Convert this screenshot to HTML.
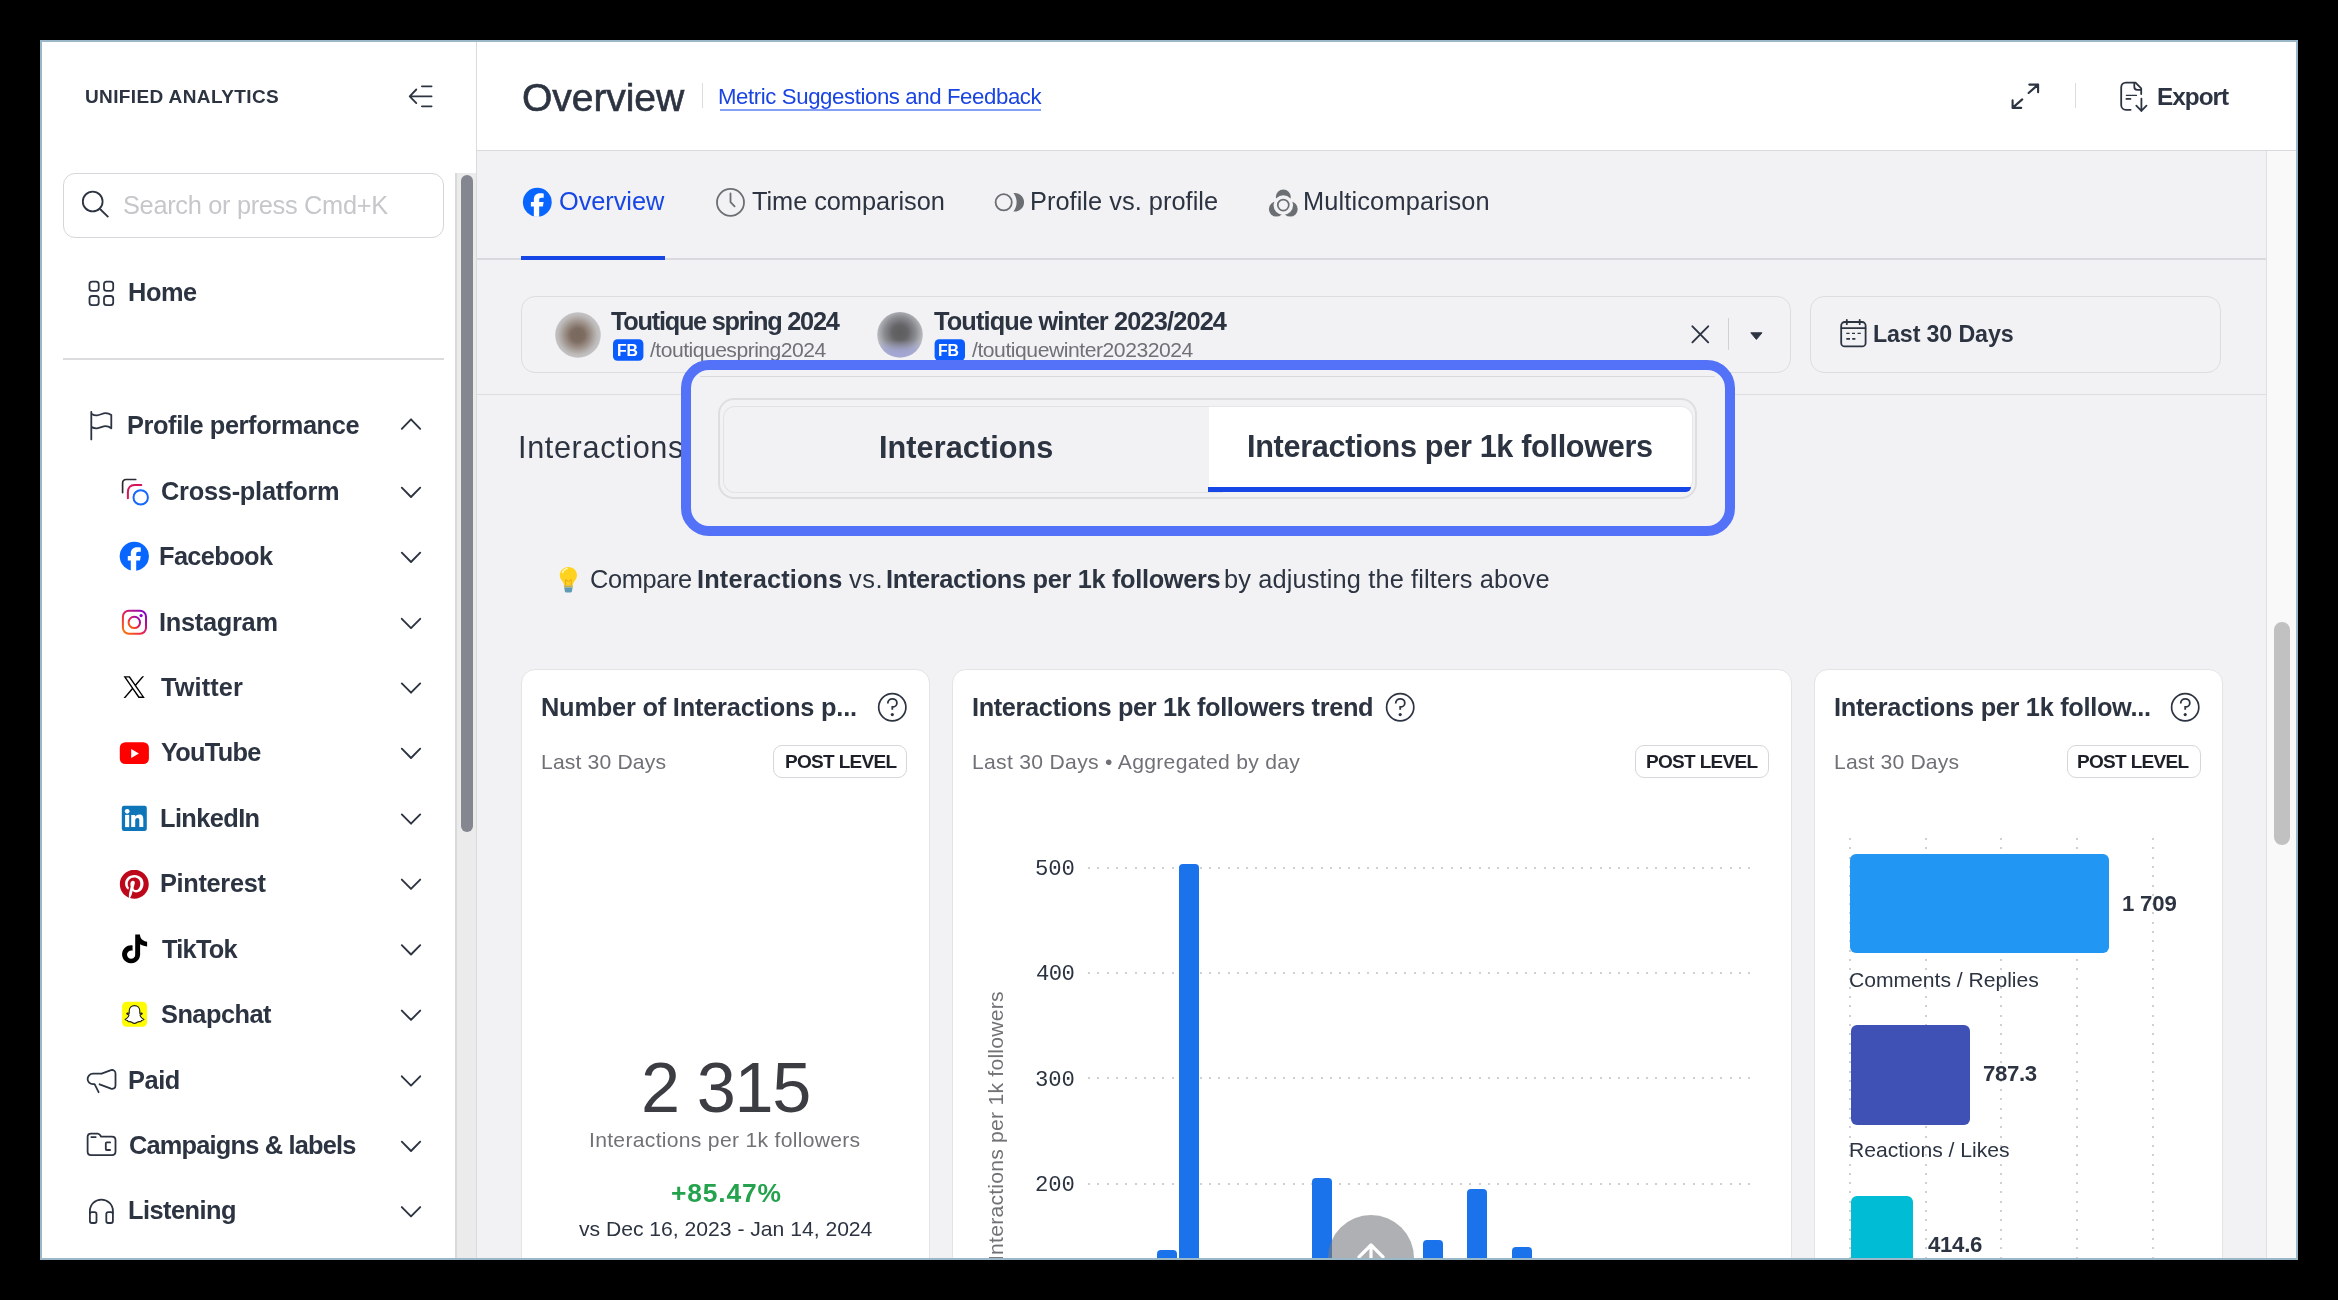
<!DOCTYPE html>
<html><head><meta charset="utf-8">
<style>
*{box-sizing:border-box;margin:0;padding:0}
html,body{width:2338px;height:1300px;overflow:hidden;background:#000;font-family:"Liberation Sans",sans-serif}
.win{position:absolute;left:40px;top:40px;width:2258px;height:1220px;border:2px solid #9bb8c9;background:#fff;overflow:hidden}
.pg{position:absolute;left:-42px;top:-42px;width:2338px;height:1300px}
.a{position:absolute}
.t{position:absolute;white-space:nowrap;line-height:1;will-change:transform}
svg{position:absolute;overflow:visible}
.card{position:absolute;background:#fff;border:1px solid #e4e4e7;border-radius:14px}
.badge{position:absolute;border:1.5px solid #d6d7da;border-radius:9px;background:#fff;width:134px;height:33px}
</style></head><body>
<div class="win"><div class="pg">
<!-- sidebar structure -->
<div class="a" style="left:475.5px;top:42px;width:1.5px;height:1216px;background:#dadbde"></div>
<div class="a" style="left:63px;top:173px;width:381px;height:65px;border:1.5px solid #d5d6d9;border-radius:12px"></div>
<div class="a" style="left:63px;top:357.5px;width:381px;height:2px;background:#dcdcde"></div>
<div class="a" style="left:455px;top:173px;width:21px;height:1085px;background:#ebebec;border-left:2px solid #d9d9dc"></div>
<div class="a" style="left:461px;top:175px;width:12px;height:657px;background:#84878f;border-radius:6px"></div>

<!-- header -->
<div class="a" style="left:477px;top:150px;width:1819px;height:1px;background:#d9dadd"></div>
<div class="a" style="left:701.5px;top:83px;width:1px;height:25px;background:#dcdde0"></div>
<div class="a" style="left:719.5px;top:108.6px;width:321.5px;height:2px;background:#86a0f3"></div>
<div class="a" style="left:2075px;top:83px;width:1px;height:25px;background:#dcdde0"></div>

<!-- main bg -->
<div class="a" style="left:477px;top:151px;width:1789px;height:1107px;background:#f2f2f4"></div>
<div class="a" style="left:2266px;top:151px;width:30px;height:1107px;background:#f9f9f9;border-left:1px solid #e0e0e2"></div>
<div class="a" style="left:2274px;top:622px;width:16px;height:223px;background:#c1c1c1;border-radius:8px"></div>

<!-- tabs -->
<div class="a" style="left:477px;top:258px;width:1789px;height:2px;background:#d9dadd"></div>
<div class="a" style="left:521px;top:256px;width:144px;height:4px;background:#1646e6"></div>

<!-- filter -->
<div class="a" style="left:521px;top:296px;width:1270px;height:77px;border:1.5px solid #dcdde0;border-radius:14px"></div>
<div class="a" style="left:1810px;top:296px;width:411px;height:77px;border:1.5px solid #dcdde0;border-radius:14px"></div>
<div class="a" style="left:477px;top:394px;width:1789px;height:1px;background:#dcdde0"></div>
<div class="a" style="left:1727.5px;top:318px;width:1.5px;height:32px;background:#d0d1d4"></div>

<!-- cards -->
<div class="card" style="left:521px;top:669px;width:409px;height:700px"></div>
<div class="card" style="left:952px;top:669px;width:840px;height:700px"></div>
<div class="card" style="left:1814px;top:669px;width:409px;height:700px"></div>
<div class="badge" style="left:773px;top:745px"></div>
<div class="badge" style="left:1635px;top:745px"></div>
<div class="badge" style="left:2066.5px;top:745px"></div>

<div class="a" style="left:1088px;top:866.7px;width:668px;height:2px;background:repeating-linear-gradient(90deg,#cfd0d3 0 2px,transparent 2px 9.3px)"></div>
<div class="a" style="left:1088px;top:972.0px;width:668px;height:2px;background:repeating-linear-gradient(90deg,#cfd0d3 0 2px,transparent 2px 9.3px)"></div>
<div class="a" style="left:1088px;top:1077.4px;width:668px;height:2px;background:repeating-linear-gradient(90deg,#cfd0d3 0 2px,transparent 2px 9.3px)"></div>
<div class="a" style="left:1088px;top:1182.7px;width:668px;height:2px;background:repeating-linear-gradient(90deg,#cfd0d3 0 2px,transparent 2px 9.3px)"></div>
<div class="a" style="left:1157.3px;top:1249.6px;width:19.7px;height:50.4px;background:#1a73ea;border-radius:4px 4px 0 0"></div>
<div class="a" style="left:1179.3px;top:864.0px;width:20.1px;height:436.0px;background:#1a73ea;border-radius:4px 4px 0 0"></div>
<div class="a" style="left:1312.2px;top:1177.8px;width:19.7px;height:122.2px;background:#1a73ea;border-radius:4px 4px 0 0"></div>
<div class="a" style="left:1423.0px;top:1240.3px;width:20.2px;height:59.7px;background:#1a73ea;border-radius:4px 4px 0 0"></div>
<div class="a" style="left:1467.4px;top:1188.9px;width:20.0px;height:111.1px;background:#1a73ea;border-radius:4px 4px 0 0"></div>
<div class="a" style="left:1512.0px;top:1247.0px;width:19.7px;height:53.0px;background:#1a73ea;border-radius:4px 4px 0 0"></div>
<div class="a" style="left:1848.8px;top:838px;width:2px;height:430px;background:repeating-linear-gradient(180deg,#cfd0d3 0 2px,transparent 2px 9.3px)"></div>
<div class="a" style="left:1924.7px;top:838px;width:2px;height:430px;background:repeating-linear-gradient(180deg,#cfd0d3 0 2px,transparent 2px 9.3px)"></div>
<div class="a" style="left:2000.4px;top:838px;width:2px;height:430px;background:repeating-linear-gradient(180deg,#cfd0d3 0 2px,transparent 2px 9.3px)"></div>
<div class="a" style="left:2076.3px;top:838px;width:2px;height:430px;background:repeating-linear-gradient(180deg,#cfd0d3 0 2px,transparent 2px 9.3px)"></div>
<div class="a" style="left:2151.7px;top:838px;width:2px;height:430px;background:repeating-linear-gradient(180deg,#cfd0d3 0 2px,transparent 2px 9.3px)"></div>
<div class="a" style="left:1850px;top:853.8px;width:259px;height:99.2px;background:#2196f3;border-radius:6px"></div>
<div class="a" style="left:1850.5px;top:1025px;width:119px;height:99.5px;background:#3f51b5;border-radius:6px"></div>
<div class="a" style="left:1850.5px;top:1196px;width:62.5px;height:120px;background:#00bcd4;border-radius:6px"></div>
<div class="a" style="left:1328px;top:1215px;width:86px;height:86px;border-radius:50%;background:rgba(120,123,128,0.6)"></div>
<svg width="2338" height="1300" style="left:0;top:0"><path d="M1371 1245V1262M1359 1257L1371 1245L1383 1257" fill="none" stroke="#fff" stroke-width="3.2" stroke-linecap="round" stroke-linejoin="round"/></svg>
<div class="t" style="left:985.05px;top:1261.2px;font-size:21.14px;color:#707276;letter-spacing:0.234px;transform-origin:0 0;transform:rotate(-90deg)">Interactions per 1k followers</div>

<!-- callout -->
<div class="a" style="z-index:10;left:681px;top:360px;width:1054px;height:176px;border:10px solid #5472f8;border-radius:28px;background:#f2f2f4"></div>
<div class="a" style="z-index:10;left:700px;top:375.5px;width:1015px;height:1.5px;background:#d9d9dc"></div>
<div class="a" style="z-index:10;left:718px;top:397.5px;width:979px;height:101px;border:2px solid #dedee1;border-radius:16px"></div>
<div class="a" style="z-index:10;left:722.5px;top:405.5px;width:500px;height:87px;border:1.5px solid #e2e2e5;border-right:none;border-radius:12px 0 0 12px"></div>
<div class="a" style="z-index:10;left:1209px;top:406px;width:484px;height:86px;background:#fff;border-radius:0 12px 12px 0;border:1px solid #e6e6e8;border-left:none"></div>
<div class="a" style="z-index:10;left:1208px;top:487px;width:483px;height:4.5px;background:#1646e6;border-radius:0 0 10px 0"></div>

<svg width="2338" height="1300" style="left:0;top:0"><g fill="none" stroke="#2c3341" stroke-width="1.8" stroke-linecap="round" stroke-linejoin="round"><path d="M421.9 86.3H431.6M409.9 96.3H431.6M421.9 106.3H431.6M416.3 89.5L409.7 96.3L416.3 103.1"/></g><g fill="none" stroke="#2c3341" stroke-width="1.8"><circle cx="92.7" cy="201.5" r="9.9"/><path d="M100 209L108.3 217.2"/></g><g fill="none" stroke="#2c3341" stroke-width="1.8"><rect x="89.5" y="281.6" width="9.2" height="9.2" rx="2.6"/><rect x="89.5" y="296" width="9.2" height="9.2" rx="2.6"/><rect x="104" y="281.6" width="9.2" height="9.2" rx="2.6"/><rect x="104" y="296" width="9.2" height="9.2" rx="2.6"/></g><path d="M91.3 439.4V411.8M91.3 413.7C93.5 415 95.2 415.6 97 415.4C100 415.1 102.8 413.2 105.5 413.2C108 413.2 110 414 111.3 414.9V428.3C110 427.3 108 426.1 105.5 426.1C102.8 426.1 100 428.1 97 428.3C95 428.5 93.2 427.9 91.3 426.9" fill="none" stroke="#2c3341" stroke-width="1.8" stroke-linecap="round" stroke-linejoin="round"/><polyline points="401.8,428.8 411,419.3 420.2,428.8" fill="none" stroke="#2c3341" stroke-width="1.9" stroke-linecap="round" stroke-linejoin="round"/><polyline points="401.8,487.7 411,497.0 420.2,487.7" fill="none" stroke="#2c3341" stroke-width="1.9" stroke-linecap="round" stroke-linejoin="round"/><polyline points="401.8,552.7 411,562.0 420.2,552.7" fill="none" stroke="#2c3341" stroke-width="1.9" stroke-linecap="round" stroke-linejoin="round"/><polyline points="401.8,618.8 411,628.1 420.2,618.8" fill="none" stroke="#2c3341" stroke-width="1.9" stroke-linecap="round" stroke-linejoin="round"/><polyline points="401.8,683.4 411,692.7 420.2,683.4" fill="none" stroke="#2c3341" stroke-width="1.9" stroke-linecap="round" stroke-linejoin="round"/><polyline points="401.8,748.7 411,758.0 420.2,748.7" fill="none" stroke="#2c3341" stroke-width="1.9" stroke-linecap="round" stroke-linejoin="round"/><polyline points="401.8,814.4 411,823.7 420.2,814.4" fill="none" stroke="#2c3341" stroke-width="1.9" stroke-linecap="round" stroke-linejoin="round"/><polyline points="401.8,879.6 411,888.9 420.2,879.6" fill="none" stroke="#2c3341" stroke-width="1.9" stroke-linecap="round" stroke-linejoin="round"/><polyline points="401.8,945.2 411,954.5 420.2,945.2" fill="none" stroke="#2c3341" stroke-width="1.9" stroke-linecap="round" stroke-linejoin="round"/><polyline points="401.8,1010.6 411,1019.9 420.2,1010.6" fill="none" stroke="#2c3341" stroke-width="1.9" stroke-linecap="round" stroke-linejoin="round"/><polyline points="401.8,1076.3 411,1085.6 420.2,1076.3" fill="none" stroke="#2c3341" stroke-width="1.9" stroke-linecap="round" stroke-linejoin="round"/><polyline points="401.8,1141.7 411,1151.0 420.2,1141.7" fill="none" stroke="#2c3341" stroke-width="1.9" stroke-linecap="round" stroke-linejoin="round"/><polyline points="401.8,1207.1 411,1216.4 420.2,1207.1" fill="none" stroke="#2c3341" stroke-width="1.9" stroke-linecap="round" stroke-linejoin="round"/><path d="M122.6 492.6V483.2C122.6 481.1 124 479.5 126.2 479.5H135.7" fill="none" stroke="#2a2b33" stroke-width="1.7" stroke-linecap="round"/><path d="M127.9 498.3V492C127.9 488 130.5 484.9 134.5 484.9H141.3" fill="none" stroke="#d6145a" stroke-width="2" stroke-linecap="round"/><circle cx="140.7" cy="497.4" r="7.2" fill="none" stroke="#1668ff" stroke-width="2"/><circle cx="134.3" cy="556.3" r="14.6" fill="#0866ff"/><path d="M130.80 571.10 L130.80 560.60 L127.80 560.60 L127.80 556.00 L130.80 556.00 L130.80 553.70 C130.80 549.50 133.10 547.20 137.10 547.20 C138.60 547.20 140.00 547.40 140.80 547.50 L140.80 551.70 L138.40 551.70 C136.80 551.70 136.20 552.50 136.20 554.00 L136.20 556.00 L140.70 556.00 L140.00 560.60 L136.20 560.60 L136.20 571.10 Z" fill="#fff"/><defs><linearGradient id="ig" x1="0" y1="1" x2="1" y2="0"><stop offset="0" stop-color="#ff7a00"/><stop offset="0.45" stop-color="#e8204f"/><stop offset="1" stop-color="#7a00d0"/></linearGradient></defs><g fill="none" stroke="url(#ig)" stroke-width="2"><rect x="122.9" y="610.8" width="23.1" height="23" rx="6"/><circle cx="134.3" cy="622.4" r="5.7"/></g><circle cx="141.1" cy="615.6" r="1.6" fill="#8a00c8"/><g transform="translate(123.5 676.2) scale(0.01775)"><path d="M714.163 519.284L1160.89 0H1055.03L667.137 450.887L357.328 0H0L468.492 681.821L0 1226.37H105.866L515.491 750.218L842.672 1226.37H1200L714.137 519.284H714.163ZM569.165 687.828L521.697 619.934L144.011 79.6944H306.615L611.412 515.685L658.88 583.579L1055.08 1150.3H892.476L569.165 687.854V687.828Z" fill="#000"/></g><rect x="119.8" y="742.2" width="29.1" height="21.9" rx="5.5" fill="#ff0000"/><path d="M131.2 749L138.9 753.5L131.2 757.9Z" fill="#fff"/><rect x="121.8" y="805.8" width="25" height="25.1" rx="2.2" fill="#0e76b8"/><circle cx="127.2" cy="811.3" r="2.35" fill="#fff"/><rect x="125.1" y="814.9" width="4.1" height="12.2" fill="#fff"/><path d="M131.2 814.9H135.1V816.7C135.8 815.5 137.2 814.5 139.4 814.5C142.4 814.5 143.3 816.5 143.3 819.4V827.1H139.3V820.3C139.3 818.9 138.9 818 137.4 818C135.9 818 135.2 819 135.2 820.6V827.1H131.2Z" fill="#fff"/><g transform="translate(119.8 869.7) scale(1.208)"><path fill="#bd081c" d="M12.017 0C5.396 0 .029 5.367.029 11.987c0 5.079 3.158 9.417 7.618 11.162-.105-.949-.199-2.403.041-3.439.219-.937 1.406-5.957 1.406-5.957s-.359-.72-.359-1.781c0-1.663.967-2.911 2.168-2.911 1.024 0 1.518.769 1.518 1.688 0 1.029-.653 2.567-.992 3.992-.285 1.193.6 2.165 1.775 2.165 2.128 0 3.768-2.245 3.768-5.487 0-2.861-2.063-4.869-5.008-4.869-3.41 0-5.409 2.562-5.409 5.199 0 1.033.394 2.143.889 2.741.099.12.112.225.085.345-.09.375-.293 1.199-.334 1.363-.053.225-.172.271-.401.165-1.495-.69-2.433-2.878-2.433-4.646 0-3.776 2.748-7.252 7.920-7.252 4.158 0 7.392 2.967 7.392 6.923 0 4.135-2.607 7.462-6.233 7.462-1.214 0-2.354-.629-2.758-1.379l-.749 2.848c-.269 1.045-1.004 2.352-1.498 3.146 1.123.345 2.306.535 3.55.535 6.607 0 11.985-5.365 11.985-11.987C23.97 5.39 18.592.026 11.985.026L12.017 0z"/></g><g transform="translate(120.2 934.5) scale(1.2)"><path fill="#000" d="M12.525.02c1.31-.02 2.61-.01 3.91-.02.08 1.53.63 3.09 1.75 4.17 1.120 1.11 2.7 1.62 4.24 1.79v4.03c-1.44-.05-2.89-.35-4.2-.97-.57-.26-1.1-.59-1.62-.93-.01 2.92.01 5.840-.02 8.750-.08 1.4-.54 2.79-1.35 3.940-1.31 1.92-3.58 3.17-5.91 3.21-1.43.08-2.86-.31-4.08-1.03-2.02-1.19-3.44-3.37-3.65-5.71-.02-.5-.03-1-.01-1.49.18-1.9 1.12-3.72 2.58-4.96 1.660-1.44 3.98-2.13 6.15-1.72.02 1.48-.04 2.96-.04 4.440-.99-.32-2.15-.23-3.02.37-.63.41-1.11 1.04-1.36 1.75-.21.51-.15 1.070-.14 1.610.24 1.64 1.82 3.02 3.5 2.87 1.12-.01 2.19-.66 2.77-1.61.19-.33.4-.67.41-1.06.1-1.790.06-3.570.07-5.360.01-4.030-.01-8.050.02-12.070z"/></g><rect x="122.1" y="1001.7" width="24.9" height="25.1" rx="4.5" fill="#fffc00"/><path d="M134.5 1005.6C131.2 1005.6 129.2 1008 129.2 1011V1013.4L127.4 1013C126.8 1013 126.5 1013.6 127 1014L129 1015.1C128.4 1017 127 1018.6 125 1019.4C125.4 1020.3 126.7 1020.4 127.6 1020.6C127.9 1021.2 128 1021.8 128.7 1021.7C129.8 1021.5 130.8 1021.6 131.8 1022.3C132.6 1022.9 133.4 1023.4 134.5 1023.4C135.6 1023.4 136.4 1022.9 137.2 1022.3C138.2 1021.6 139.2 1021.5 140.3 1021.7C141 1021.8 141.1 1021.2 141.4 1020.6C142.3 1020.4 143.6 1020.3 144 1019.4C142 1018.6 140.6 1017 140 1015.1L142 1014C142.5 1013.6 142.2 1013 141.6 1013L139.8 1013.4V1011C139.8 1008 137.8 1005.6 134.5 1005.6Z" fill="#fff" stroke="#1d1d1d" stroke-width="1.1" stroke-linejoin="round"/><path d="M101.6 1073.7H93C89.9 1073.7 87.6 1076.2 87.6 1079C87.6 1081.8 89.9 1084.2 93 1084.2H94.6L98.6 1092.2M99.6 1084.3L111 1088.7C113.3 1089.4 115.5 1087.9 115.5 1085.5V1073.4C115.5 1071 113.3 1069.5 111 1070.2L101.6 1073.7" fill="none" stroke="#2c3341" stroke-width="1.8" stroke-linecap="round" stroke-linejoin="round"/><path d="M87.6 1151.5V1137C87.6 1135 89 1133.6 91 1133.6H97.6C98.5 1133.6 99.2 1134 99.8 1134.8L101.1 1136.6H112C114 1136.6 115.5 1138 115.5 1140V1151.6C115.5 1153.6 114 1155.1 112 1155.1H91C89 1155.1 87.6 1153.6 87.6 1151.5Z" fill="none" stroke="#2c3341" stroke-width="1.8" stroke-linejoin="round"/><path d="M91.3 1137.1H95.7M110.1 1142.4H106.8Q105.8 1142.4 105.8 1143.4V1149Q105.8 1150 106.8 1150H110.1" fill="none" stroke="#2c3341" stroke-width="1.8" stroke-linecap="round"/><g fill="none" stroke="#2c3341" stroke-width="1.8" stroke-linejoin="round"><path d="M89.9 1214V1211C89.9 1204.6 95 1199.6 101.4 1199.6C107.8 1199.6 112.9 1204.6 112.9 1211V1214"/><rect x="89.9" y="1212.2" width="6.6" height="10.8" rx="2"/><rect x="106.3" y="1212.2" width="6.6" height="10.8" rx="2"/></g><g fill="none" stroke="#2c3341" stroke-width="2.1" stroke-linecap="round" stroke-linejoin="round"><path d="M2029.3 84.6H2038.1V92.3M2038.1 84.6L2028.6 93M2012.6 100.4V107.9H2021.2M2012.6 107.9L2022.2 99.4"/></g><g fill="none" stroke="#2c3341" stroke-width="1.8" stroke-linecap="round" stroke-linejoin="round"><path d="M2130.6 109.8H2126C2123.2 109.8 2121.2 107.8 2121.2 105V87.4C2121.2 84.6 2123.2 82.6 2126 82.6H2135.5L2141.2 88.4V94"/><path d="M2134.3 83V86.8C2134.3 88.5 2135.5 89.8 2137.2 89.8H2141"/><path d="M2141.4 98.6V111M2136.3 105.7L2141.4 110.9L2146.5 105.7"/><path d="M2126.4 98.9H2130.4"/></g><path d="M2126.4 95.4H2136.5" stroke="#2c3341" stroke-width="1.3" stroke-linecap="round"/><circle cx="537.3" cy="202.2" r="14.4" fill="#0866ff"/><path d="M533.85 216.80 L533.85 206.44 L530.89 206.44 L530.89 201.90 L533.85 201.90 L533.85 199.64 C533.85 195.49 536.12 193.22 540.06 193.22 C541.54 193.22 542.92 193.42 543.71 193.52 L543.71 197.66 L541.34 197.66 C539.77 197.66 539.17 198.45 539.17 199.93 L539.17 201.90 L543.61 201.90 L542.92 206.44 L539.17 206.44 L539.17 216.80 Z" fill="#fff"/><g fill="none" stroke="#6b6f73" stroke-width="1.8" stroke-linecap="round" stroke-linejoin="round"><circle cx="730.5" cy="202.4" r="13.5"/><path d="M730.5 193.4V202.2L734.6 206.4"/></g><circle cx="1003.7" cy="202.3" r="8.1" fill="none" stroke="#6b6f73" stroke-width="1.8"/><path d="M1013.4 193.1A9.3 9.3 0 1 1 1013.4 211.5A14.8 14.8 0 0 0 1013.4 193.1Z" fill="#6b6f73"/><defs><mask id="mc"><rect x="1260" y="180" width="50" height="45" fill="#fff"/><circle cx="1283.3" cy="205.1" r="9.8" fill="#000"/></mask></defs><g mask="url(#mc)" fill="#6b6f73"><circle cx="1283.3" cy="197.1" r="7.5"/><circle cx="1276.4" cy="209.1" r="7.5"/><circle cx="1290.2" cy="209.1" r="7.5"/></g><circle cx="1283.3" cy="205.1" r="5.5" fill="none" stroke="#6b6f73" stroke-width="1.7"/><defs><radialGradient id="av1" cx="0.49" cy="0.5" r="0.5"><stop offset="0" stop-color="#79685c"/><stop offset="0.3" stop-color="#7d6c61"/><stop offset="0.6" stop-color="#a0958e"/><stop offset="0.85" stop-color="#bcb9b8"/><stop offset="1" stop-color="#c4c4c6"/></radialGradient><radialGradient id="av2" cx="0.5" cy="0.45" r="0.55"><stop offset="0" stop-color="#5d5d60"/><stop offset="0.3" stop-color="#646467"/><stop offset="0.62" stop-color="#8a8b90"/><stop offset="0.9" stop-color="#b9babe"/><stop offset="1" stop-color="#c4c5c8"/></radialGradient><linearGradient id="av2b" x1="0" y1="0" x2="0" y2="1"><stop offset="0.62" stop-color="#9fa3d6" stop-opacity="0"/><stop offset="0.85" stop-color="#9fa3d6" stop-opacity="0.75"/><stop offset="1" stop-color="#9fa3d6" stop-opacity="0.9"/></linearGradient></defs><circle cx="578" cy="335" r="22.8" fill="url(#av1)"/><circle cx="900" cy="334.8" r="22.8" fill="url(#av2)"/><circle cx="900" cy="334.8" r="22.8" fill="url(#av2b)"/><rect x="613" y="339.2" width="30.4" height="21.6" rx="4.5" fill="#0b5cff"/><rect x="934.6" y="339.2" width="30.4" height="21.6" rx="4.5" fill="#0b5cff"/><path d="M1692.4 326.3L1708.2 342.3M1708.2 326.3L1692.4 342.3" stroke="#2c3341" stroke-width="1.9" stroke-linecap="round"/><path d="M1750.8 332.8H1762L1756.4 339.4Z" fill="#2c3341" stroke="#2c3341" stroke-width="1" stroke-linejoin="round"/><g fill="none" stroke="#2c3341" stroke-width="1.8" stroke-linecap="round"><rect x="1841.2" y="322" width="24.4" height="24.4" rx="3.5"/><path d="M1841.4 328.2H1865.4M1846.8 319.8V324.2M1859.7 319.8V324.2"/></g><path d="M1846.3 333.3H1849.6M1852 333.3H1855M1857.5 333.3H1860.8" stroke="#2c3341" stroke-width="1.2"/><path d="M1846.3 338.9H1850M1852.2 338.9H1855.4" stroke="#2c3341" stroke-width="1.9"/><circle cx="892.3" cy="707.2" r="13.6" fill="none" stroke="#2c3341" stroke-width="1.7"/><path d="M887.8 703.4000000000001 C887.8 700.7 889.8 698.9000000000001 892.3 698.9000000000001 C894.9 698.9000000000001 896.9 700.6 896.9 702.9000000000001 C896.9 705.3000000000001 894.9 707.0 892.3 707.0 V709.7" fill="none" stroke="#2c3341" stroke-width="1.8"/><circle cx="892.3" cy="714.6" r="1.6" fill="#2c3341"/><circle cx="1400.2" cy="707.2" r="13.6" fill="none" stroke="#2c3341" stroke-width="1.7"/><path d="M1395.7 703.4000000000001 C1395.7 700.7 1397.7 698.9000000000001 1400.2 698.9000000000001 C1402.8 698.9000000000001 1404.8 700.6 1404.8 702.9000000000001 C1404.8 705.3000000000001 1402.8 707.0 1400.2 707.0 V709.7" fill="none" stroke="#2c3341" stroke-width="1.8"/><circle cx="1400.2" cy="714.6" r="1.6" fill="#2c3341"/><circle cx="2185.2" cy="707.2" r="13.6" fill="none" stroke="#2c3341" stroke-width="1.7"/><path d="M2180.7 703.4000000000001 C2180.7 700.7 2182.7 698.9000000000001 2185.2 698.9000000000001 C2187.7999999999997 698.9000000000001 2189.7999999999997 700.6 2189.7999999999997 702.9000000000001 C2189.7999999999997 705.3000000000001 2187.7999999999997 707.0 2185.2 707.0 V709.7" fill="none" stroke="#2c3341" stroke-width="1.8"/><circle cx="2185.2" cy="714.6" r="1.6" fill="#2c3341"/><path d="M568.4 567C563.2 567 559.8 571 559.8 575.2C559.8 578.6 561.8 580.4 563 582.2C563.9 583.5 564 584.6 564 585.6H572.8C572.8 584.6 572.9 583.5 573.8 582.2C575 580.4 577 578.6 577 575.2C577 571 573.6 567 568.4 567Z" fill="#ffd21f"/><path d="M562.5 572.5C563.3 570.3 565 569 567 568.5" stroke="#fff5b0" stroke-width="1.6" fill="none" stroke-linecap="round"/><path d="M565.6 585.2V579.5L568.4 581.5L571.2 579.5V585.2" stroke="#e8a317" stroke-width="0.9" fill="none"/><rect x="564" y="585.3" width="8.8" height="2.2" fill="#c7b04a"/><path d="M564.2 587.4H572.6L572 591C571.8 592 571 592.6 570 592.6H566.8C565.8 592.6 565 592 564.8 591Z" fill="#5f9bb4"/></svg>
<div class="t" style="left:84.7px;top:87.2px;font-size:19.03px;font-weight:700;color:#2c3341;font-family:'Liberation Sans',sans-serif;letter-spacing:0.373px;">UNIFIED ANALYTICS</div>
<div class="t" style="left:123.3px;top:193.0px;font-size:25.37px;font-weight:400;color:#c6c7ca;font-family:'Liberation Sans',sans-serif;letter-spacing:-0.310px;">Search or press Cmd+K</div>
<div class="t" style="left:128.2px;top:279.9px;font-size:25.37px;font-weight:700;color:#2c3341;font-family:'Liberation Sans',sans-serif;letter-spacing:-0.416px;">Home</div>
<div class="t" style="left:127.0px;top:413.0px;font-size:25.37px;font-weight:700;color:#2c3341;font-family:'Liberation Sans',sans-serif;letter-spacing:-0.393px;">Profile performance</div>
<div class="t" style="left:161.0px;top:479.0px;font-size:25.37px;font-weight:700;color:#2c3341;font-family:'Liberation Sans',sans-serif;letter-spacing:-0.247px;">Cross-platform</div>
<div class="t" style="left:159.4px;top:544.0px;font-size:25.37px;font-weight:700;color:#2c3341;font-family:'Liberation Sans',sans-serif;letter-spacing:-0.610px;">Facebook</div>
<div class="t" style="left:159.4px;top:610.1px;font-size:25.37px;font-weight:700;color:#2c3341;font-family:'Liberation Sans',sans-serif;letter-spacing:-0.281px;">Instagram</div>
<div class="t" style="left:161.4px;top:674.7px;font-size:25.37px;font-weight:700;color:#2c3341;font-family:'Liberation Sans',sans-serif;letter-spacing:0.120px;">Twitter</div>
<div class="t" style="left:160.8px;top:740.0px;font-size:25.37px;font-weight:700;color:#2c3341;font-family:'Liberation Sans',sans-serif;letter-spacing:-0.732px;">YouTube</div>
<div class="t" style="left:160.0px;top:805.7px;font-size:25.37px;font-weight:700;color:#2c3341;font-family:'Liberation Sans',sans-serif;letter-spacing:-0.597px;">LinkedIn</div>
<div class="t" style="left:160.0px;top:870.9px;font-size:25.37px;font-weight:700;color:#2c3341;font-family:'Liberation Sans',sans-serif;letter-spacing:-0.325px;">Pinterest</div>
<div class="t" style="left:162.0px;top:936.5px;font-size:25.37px;font-weight:700;color:#2c3341;font-family:'Liberation Sans',sans-serif;letter-spacing:-0.756px;">TikTok</div>
<div class="t" style="left:161.0px;top:1001.9px;font-size:25.37px;font-weight:700;color:#2c3341;font-family:'Liberation Sans',sans-serif;letter-spacing:-0.528px;">Snapchat</div>
<div class="t" style="left:127.6px;top:1067.6px;font-size:25.37px;font-weight:700;color:#2c3341;font-family:'Liberation Sans',sans-serif;letter-spacing:-0.420px;">Paid</div>
<div class="t" style="left:128.6px;top:1133.0px;font-size:25.37px;font-weight:700;color:#2c3341;font-family:'Liberation Sans',sans-serif;letter-spacing:-0.796px;">Campaigns &amp; labels</div>
<div class="t" style="left:127.6px;top:1198.4px;font-size:25.37px;font-weight:700;color:#2c3341;font-family:'Liberation Sans',sans-serif;letter-spacing:-0.527px;">Listening</div>
<div class="t" style="left:521.6px;top:77.8px;font-size:39.11px;font-weight:400;color:#2c3341;font-family:'Liberation Sans',sans-serif;letter-spacing:-0.106px;-webkit-text-stroke:0.6px #2c3341;">Overview</div>
<div class="t" style="left:717.5px;top:86.0px;font-size:22.20px;font-weight:400;color:#1a44e2;font-family:'Liberation Sans',sans-serif;letter-spacing:-0.395px;">Metric Suggestions and Feedback</div>
<div class="t" style="left:2157.0px;top:84.5px;font-size:24.31px;font-weight:700;color:#2c3341;font-family:'Liberation Sans',sans-serif;letter-spacing:-0.974px;">Export</div>
<div class="t" style="left:559.0px;top:189.3px;font-size:25.37px;font-weight:400;color:#1646e6;font-family:'Liberation Sans',sans-serif;letter-spacing:-0.053px;">Overview</div>
<div class="t" style="left:752.1px;top:189.3px;font-size:25.37px;font-weight:400;color:#2c3341;font-family:'Liberation Sans',sans-serif;letter-spacing:-0.054px;">Time comparison</div>
<div class="t" style="left:1030.0px;top:189.3px;font-size:25.37px;font-weight:400;color:#2c3341;font-family:'Liberation Sans',sans-serif;letter-spacing:0.037px;">Profile vs. profile</div>
<div class="t" style="left:1303.4px;top:189.3px;font-size:25.37px;font-weight:400;color:#2c3341;font-family:'Liberation Sans',sans-serif;letter-spacing:0.150px;">Multicomparison</div>
<div class="t" style="left:610.8px;top:308.6px;font-size:25.37px;font-weight:700;color:#2c3341;font-family:'Liberation Sans',sans-serif;letter-spacing:-1.282px;">Toutique spring 2024</div>
<div class="t" style="left:649.5px;top:338.6px;font-size:21.14px;font-weight:400;color:#6f7177;font-family:'Liberation Sans',sans-serif;letter-spacing:-0.519px;">/toutiquespring2024</div>
<div class="t" style="left:934.1px;top:308.6px;font-size:25.37px;font-weight:700;color:#2c3341;font-family:'Liberation Sans',sans-serif;letter-spacing:-0.868px;">Toutique winter 2023/2024</div>
<div class="t" style="left:971.5px;top:338.6px;font-size:21.14px;font-weight:400;color:#6f7177;font-family:'Liberation Sans',sans-serif;letter-spacing:-0.456px;">/toutiquewinter20232024</div>
<div class="t" style="left:1873.3px;top:322.8px;font-size:23.25px;font-weight:700;color:#2c3341;font-family:'Liberation Sans',sans-serif;letter-spacing:-0.142px;">Last 30 Days</div>
<div class="t" style="left:518.4px;top:432.4px;font-size:30.65px;font-weight:400;color:#2c3341;font-family:'Liberation Sans',sans-serif;letter-spacing:0.629px;">Interactions</div>
<div class="t" style="left:590.1px;top:567.0px;font-size:25.37px;font-weight:400;color:#2c3341;font-family:'Liberation Sans',sans-serif;letter-spacing:-0.366px;">Compare</div>
<div class="t" style="left:696.6px;top:567.0px;font-size:25.37px;font-weight:700;color:#2c3341;font-family:'Liberation Sans',sans-serif;letter-spacing:0.144px;">Interactions</div>
<div class="t" style="left:849.1px;top:567.0px;font-size:25.37px;font-weight:400;color:#2c3341;font-family:'Liberation Sans',sans-serif;letter-spacing:0.620px;">vs.</div>
<div class="t" style="left:886.0px;top:567.0px;font-size:25.37px;font-weight:700;color:#2c3341;font-family:'Liberation Sans',sans-serif;letter-spacing:-0.328px;">Interactions per 1k followers</div>
<div class="t" style="left:1224.0px;top:567.0px;font-size:25.37px;font-weight:400;color:#2c3341;font-family:'Liberation Sans',sans-serif;letter-spacing:0.141px;">by adjusting the filters above</div>
<div class="t" style="left:879.2px;top:432.4px;font-size:30.65px;font-weight:700;color:#2c3341;font-family:'Liberation Sans',sans-serif;letter-spacing:0.063px;filter:blur(0.4px);z-index:12;">Interactions</div>
<div class="t" style="left:1247.2px;top:431.1px;font-size:30.65px;font-weight:700;color:#2c3341;font-family:'Liberation Sans',sans-serif;letter-spacing:-0.336px;filter:blur(0.4px);z-index:12;">Interactions per 1k followers</div>
<div class="t" style="left:541.2px;top:695.0px;font-size:25.37px;font-weight:700;color:#2c3341;font-family:'Liberation Sans',sans-serif;letter-spacing:-0.201px;">Number of Interactions p...</div>
<div class="t" style="left:541.2px;top:751.1px;font-size:21.14px;font-weight:400;color:#6f7177;font-family:'Liberation Sans',sans-serif;letter-spacing:0.160px;">Last 30 Days</div>
<div class="t" style="left:971.5px;top:695.0px;font-size:25.37px;font-weight:700;color:#2c3341;font-family:'Liberation Sans',sans-serif;letter-spacing:-0.377px;">Interactions per 1k followers trend</div>
<div class="t" style="left:971.5px;top:751.1px;font-size:21.14px;font-weight:400;color:#6f7177;font-family:'Liberation Sans',sans-serif;letter-spacing:0.300px;">Last 30 Days • Aggregated by day</div>
<div class="t" style="left:1834.2px;top:695.0px;font-size:25.37px;font-weight:700;color:#2c3341;font-family:'Liberation Sans',sans-serif;letter-spacing:-0.319px;">Interactions per 1k follow...</div>
<div class="t" style="left:1834.2px;top:751.1px;font-size:21.14px;font-weight:400;color:#6f7177;font-family:'Liberation Sans',sans-serif;letter-spacing:0.160px;">Last 30 Days</div>
<div class="t" style="left:784.7px;top:752.1px;font-size:19.03px;font-weight:700;color:#1d2028;font-family:'Liberation Sans',sans-serif;letter-spacing:-0.684px;">POST LEVEL</div>
<div class="t" style="left:1645.8px;top:752.1px;font-size:19.03px;font-weight:700;color:#1d2028;font-family:'Liberation Sans',sans-serif;letter-spacing:-0.683px;">POST LEVEL</div>
<div class="t" style="left:2077.4px;top:752.1px;font-size:19.03px;font-weight:700;color:#1d2028;font-family:'Liberation Sans',sans-serif;letter-spacing:-0.683px;">POST LEVEL</div>
<div class="t" style="left:641.2px;top:1052.9px;font-size:70.29px;font-weight:400;color:#3b3d42;font-family:'Liberation Sans',sans-serif;letter-spacing:-1.415px;">2 315</div>
<div class="t" style="left:588.8px;top:1129.1px;font-size:21.14px;font-weight:400;color:#707276;font-family:'Liberation Sans',sans-serif;letter-spacing:0.292px;">Interactions per 1k followers</div>
<div class="t" style="left:670.5px;top:1180.0px;font-size:26.42px;font-weight:700;color:#25a24d;font-family:'Liberation Sans',sans-serif;letter-spacing:0.833px;">+85.47%</div>
<div class="t" style="left:578.8px;top:1218.4px;font-size:21.14px;font-weight:400;color:#2c3341;font-family:'Liberation Sans',sans-serif;letter-spacing:-0.008px;">vs Dec 16, 2023 - Jan 14, 2024</div>
<div class="t" style="left:1035.2px;top:858.1px;font-size:22.26px;font-weight:400;color:#2b3340;font-family:'Liberation Mono',monospace;letter-spacing:-0.052px;">500</div>
<div class="t" style="left:1036.2px;top:963.4px;font-size:22.26px;font-weight:400;color:#2b3340;font-family:'Liberation Mono',monospace;letter-spacing:-0.552px;">400</div>
<div class="t" style="left:1035.2px;top:1068.8px;font-size:22.26px;font-weight:400;color:#2b3340;font-family:'Liberation Mono',monospace;letter-spacing:-0.052px;">300</div>
<div class="t" style="left:1035.2px;top:1174.1px;font-size:22.26px;font-weight:400;color:#2b3340;font-family:'Liberation Mono',monospace;letter-spacing:-0.052px;">200</div>
<div class="t" style="left:617.0px;top:342.9px;font-size:15.85px;font-weight:700;color:#ffffff;font-family:'Liberation Sans',sans-serif;letter-spacing:-0.278px;">FB</div>
<div class="t" style="left:938.4px;top:342.9px;font-size:15.85px;font-weight:700;color:#ffffff;font-family:'Liberation Sans',sans-serif;letter-spacing:-0.278px;">FB</div>
<div class="t" style="left:2122.0px;top:892.9px;font-size:22.20px;font-weight:700;color:#2c3341;font-family:'Liberation Sans',sans-serif;letter-spacing:-0.196px;">1 709</div>
<div class="t" style="left:1849.4px;top:968.6px;font-size:21.14px;font-weight:400;color:#2c3341;font-family:'Liberation Sans',sans-serif;letter-spacing:-0.021px;">Comments / Replies</div>
<div class="t" style="left:1983.0px;top:1063.3px;font-size:22.20px;font-weight:700;color:#2c3341;font-family:'Liberation Sans',sans-serif;letter-spacing:-0.371px;">787.3</div>
<div class="t" style="left:1848.5px;top:1139.3px;font-size:21.14px;font-weight:400;color:#2c3341;font-family:'Liberation Sans',sans-serif;letter-spacing:-0.021px;">Reactions / Likes</div>
<div class="t" style="left:1928.0px;top:1233.7px;font-size:22.20px;font-weight:700;color:#2c3341;font-family:'Liberation Sans',sans-serif;letter-spacing:-0.296px;">414.6</div>
</div></div>
</body></html>
